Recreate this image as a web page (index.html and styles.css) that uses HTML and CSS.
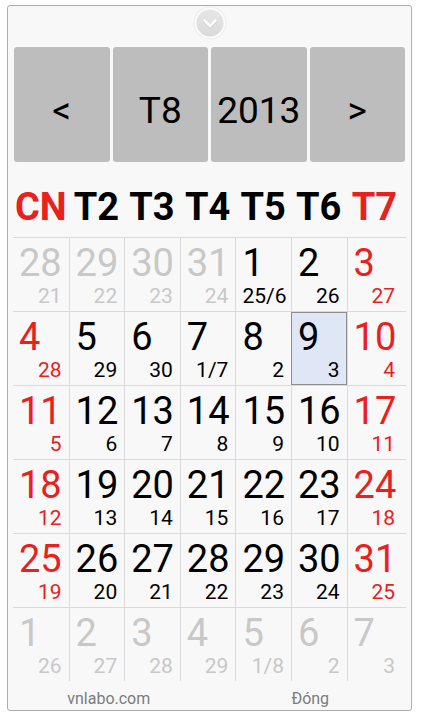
FILE: index.html
```html
<!DOCTYPE html>
<html lang="vi">
<head>
<meta charset="utf-8">
<title>Lịch</title>
<link rel="stylesheet" href="styles.css">
</head>
<body>
<div class="card">
  <div class="handle-row">
    <div class="handle">
      <svg width="34" height="34" viewBox="0 0 34 34">
        <defs>
          <linearGradient id="hg" x1="0" y1="0" x2="0" y2="1">
            <stop offset="0" stop-color="#e6e6e6"/>
            <stop offset="1" stop-color="#dadada"/>
          </linearGradient>
        </defs>
        <circle cx="17" cy="17" r="16.5" fill="#ececec"/>
        <circle cx="17" cy="17" r="15.5" fill="#fbfbfb"/>
        <circle cx="17" cy="17" r="13.5" fill="url(#hg)"/>
        <path d="M11.5 15 L17 20.5 L22.5 15" fill="none" stroke="#cacaca" stroke-width="3.6" stroke-linecap="round" stroke-linejoin="round"/>
        <path d="M11.5 14.5 L17 20 L22.5 14.5" fill="none" stroke="#ffffff" stroke-width="2.8" stroke-linecap="round" stroke-linejoin="round"/>
      </svg>
    </div>
  </div>
  <div class="nav">
    <div class="nav-btn">&lt;</div>
    <div class="nav-btn">T8</div>
    <div class="nav-btn">2013</div>
    <div class="nav-btn">&gt;</div>
  </div>
  <div class="weekdays">
    <div class="wd red">CN</div>
    <div class="wd">T2</div>
    <div class="wd">T3</div>
    <div class="wd">T4</div>
    <div class="wd">T5</div>
    <div class="wd">T6</div>
    <div class="wd red">T7</div>
  </div>
  <div class="grid">
    <div class="row">
      <div class="cell gray"><div class="big">28</div><div class="small">21</div></div>
      <div class="cell gray"><div class="big">29</div><div class="small">22</div></div>
      <div class="cell gray"><div class="big">30</div><div class="small">23</div></div>
      <div class="cell gray"><div class="big">31</div><div class="small">24</div></div>
      <div class="cell"><div class="big">1</div><div class="small">25/6</div></div>
      <div class="cell"><div class="big">2</div><div class="small">26</div></div>
      <div class="cell red"><div class="big">3</div><div class="small">27</div></div>
    </div>
    <div class="row">
      <div class="cell red"><div class="big">4</div><div class="small">28</div></div>
      <div class="cell"><div class="big">5</div><div class="small">29</div></div>
      <div class="cell"><div class="big">6</div><div class="small">30</div></div>
      <div class="cell"><div class="big">7</div><div class="small">1/7</div></div>
      <div class="cell"><div class="big">8</div><div class="small">2</div></div>
      <div class="cell selected"><div class="big">9</div><div class="small">3</div></div>
      <div class="cell red"><div class="big">10</div><div class="small">4</div></div>
    </div>
    <div class="row">
      <div class="cell red"><div class="big">11</div><div class="small">5</div></div>
      <div class="cell"><div class="big">12</div><div class="small">6</div></div>
      <div class="cell"><div class="big">13</div><div class="small">7</div></div>
      <div class="cell"><div class="big">14</div><div class="small">8</div></div>
      <div class="cell"><div class="big">15</div><div class="small">9</div></div>
      <div class="cell"><div class="big">16</div><div class="small">10</div></div>
      <div class="cell red"><div class="big">17</div><div class="small">11</div></div>
    </div>
    <div class="row">
      <div class="cell red"><div class="big">18</div><div class="small">12</div></div>
      <div class="cell"><div class="big">19</div><div class="small">13</div></div>
      <div class="cell"><div class="big">20</div><div class="small">14</div></div>
      <div class="cell"><div class="big">21</div><div class="small">15</div></div>
      <div class="cell"><div class="big">22</div><div class="small">16</div></div>
      <div class="cell"><div class="big">23</div><div class="small">17</div></div>
      <div class="cell red"><div class="big">24</div><div class="small">18</div></div>
    </div>
    <div class="row">
      <div class="cell red"><div class="big">25</div><div class="small">19</div></div>
      <div class="cell"><div class="big">26</div><div class="small">20</div></div>
      <div class="cell"><div class="big">27</div><div class="small">21</div></div>
      <div class="cell"><div class="big">28</div><div class="small">22</div></div>
      <div class="cell"><div class="big">29</div><div class="small">23</div></div>
      <div class="cell"><div class="big">30</div><div class="small">24</div></div>
      <div class="cell red"><div class="big">31</div><div class="small">25</div></div>
    </div>
    <div class="row">
      <div class="cell gray"><div class="big">1</div><div class="small">26</div></div>
      <div class="cell gray"><div class="big">2</div><div class="small">27</div></div>
      <div class="cell gray"><div class="big">3</div><div class="small">28</div></div>
      <div class="cell gray"><div class="big">4</div><div class="small">29</div></div>
      <div class="cell gray"><div class="big">5</div><div class="small">1/8</div></div>
      <div class="cell gray"><div class="big">6</div><div class="small">2</div></div>
      <div class="cell gray"><div class="big">7</div><div class="small">3</div></div>
    </div>
  </div>
  <div class="footer">
    <div class="foot-btn">vnlabo.com</div>
    <div class="foot-btn">Đóng</div>
  </div>
</div>
</body>
</html>
```

FILE: styles.css
```css
* { box-sizing: border-box; }
html, body { margin: 0; padding: 0; background: #ffffff; }
body {
  font-family: Roboto, "Noto Sans", "Liberation Sans", sans-serif;
  color: #000;
}
.card {
  margin: 5px 0 0 7px;
  width: 405px;
  height: 706px;
  border: 1px solid #adadad;
  border-radius: 3px;
  background: #f8f8f8;
  display: flex;
  flex-direction: column;
}
.handle-row {
  height: 41px;
  display: flex;
  justify-content: center;
  padding-top: 0;
}
.handle { width: 34px; height: 34px; }
.handle svg { display: block; }
.nav {
  height: 115px;
  margin: 0 6px;
  display: flex;
  gap: 3px;
}
.nav-btn {
  flex: 1;
  background: #bdbdbd;
  border-radius: 3px;
  display: flex;
  align-items: center;
  justify-content: center;
  font-size: 37px;
  line-height: 37px;
  padding-top: 11px;
}
.weekdays {
  height: 75px;
  margin-left: 5px;
  display: grid;
  grid-template-columns: repeat(7, 55.6px);
  padding-top: 26px;
}
.wd {
  text-align: center;
  font-weight: bold;
  font-size: 38px;
  line-height: 38px;
}
.red { color: #e8211f; }
.gray { color: #c8c8c8; }
.grid {
  margin-left: 5px;
  width: 393px;
}
.row {
  height: 74px;
  border-top: 1px solid #dadada;
  display: grid;
  grid-template-columns: repeat(7, 55.6px);
}
.cell {
  height: 73px;
  padding: 6px 7px 0 6px;
  border-left: 1px solid #dadada;
}
.cell:first-child { border-left: none; }
.big {
  font-size: 38px;
  line-height: 38px;
  height: 38px;
}
.small {
  margin-top: 4px;
  font-size: 21px;
  line-height: 21px;
  text-align: right;
  white-space: nowrap;
}
.selected {
  background: #dfe7f6;
  border-left-color: #8e8e8e;
  box-shadow: inset 0 1px #8e8e8e, inset -1px 0 #8e8e8e, inset 0 -1px #8e8e8e;
}
.footer {
  height: 29px;
  display: flex;
  padding-top: 6px;
}
.foot-btn {
  flex: 1;
  text-align: center;
  font-size: 16px;
  line-height: 23px;
  color: #7b7b7b;
}
```
